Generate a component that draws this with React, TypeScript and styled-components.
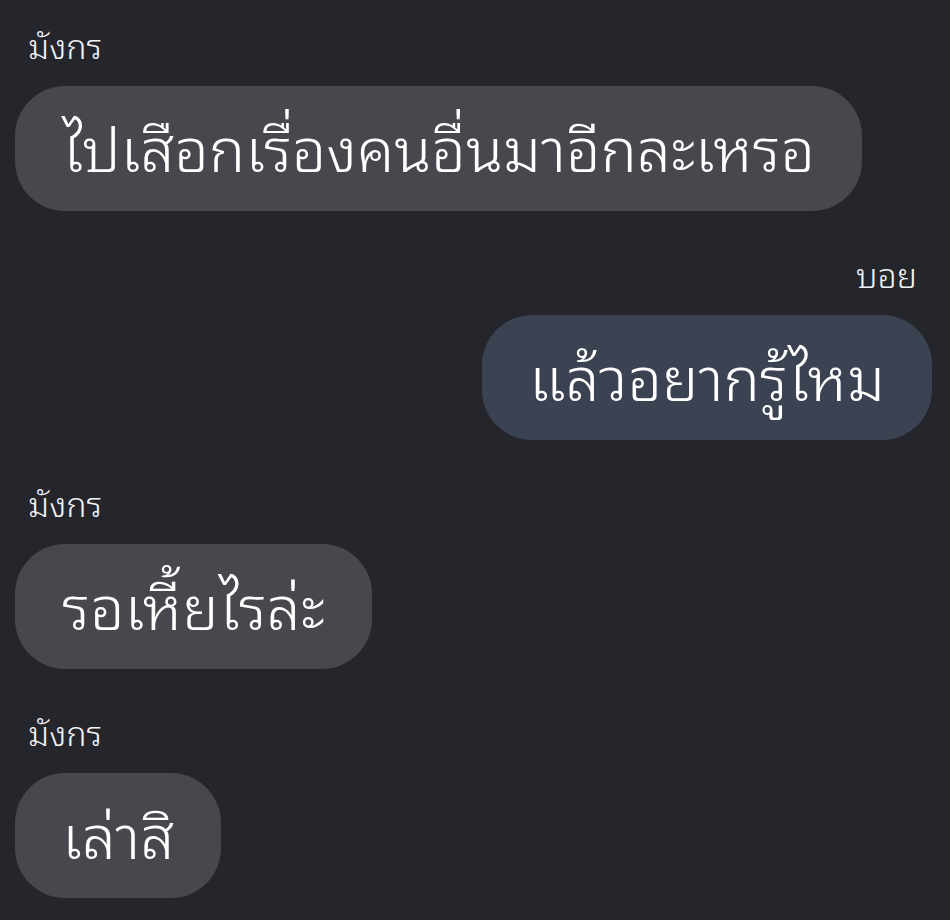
import React from "react";
import styled, { createGlobalStyle } from "styled-components";

const Global = createGlobalStyle`
  html, body { margin: 0; padding: 0; background: #25262b; }
  body { font-family: "Noto Sans Thai Looped", "Loma", "Garuda", "Noto Sans Thai", "Noto Sans", sans-serif; }
`;

const Page = styled.div`
  width: 950px;
  height: 920px;
  box-sizing: border-box;
  padding: 28px 18px 0 15px;
  display: flex;
  flex-direction: column;
  gap: 46px;
  background: #25262b;
  overflow: hidden;
`;

const Group = styled.div<{ $mine?: boolean }>`
  display: flex;
  flex-direction: column;
  align-items: ${(p) => (p.$mine ? "flex-end" : "flex-start")};
`;

const Name = styled.div<{ $mine?: boolean }>`
  color: #f2f2f4;
  font-size: 34px;
  font-weight: 300;
  line-height: 32px;
  height: 40px;
  margin-bottom: 18px;
  padding-left: ${(p) => (p.$mine ? "0" : "13px")};
  margin-right: ${(p) => (p.$mine ? "15px" : "0")};
`;

const Bubble = styled.div<{ $mine?: boolean }>`
  height: 125px;
  box-sizing: border-box;
  display: flex;
  align-items: center;
  padding: 0 47px 8px;
  border-radius: 50px;
  background: ${(p) => (p.$mine ? "#3b4352" : "#47484d")};
  color: #ffffff;
  font-size: 61px;
  font-weight: 300;
  white-space: nowrap;
`;

const messages = [
  { name: "มังกร", text: "ไปเสือกเรื่องคนอื่นมาอีกละเหรอ", mine: false },
  { name: "บอย", text: "แล้วอยากรู้ไหม", mine: true },
  { name: "มังกร", text: "รอเหี้ยไรล่ะ", mine: false },
  { name: "มังกร", text: "เล่าสิ", mine: false },
];

export default function App() {
  return (
    <>
      <Global />
      <Page>
        {messages.map((m, i) => (
          <Group key={i} $mine={m.mine}>
            <Name $mine={m.mine}>{m.name}</Name>
            <Bubble $mine={m.mine}>{m.text}</Bubble>
          </Group>
        ))}
      </Page>
    </>
  );
}
